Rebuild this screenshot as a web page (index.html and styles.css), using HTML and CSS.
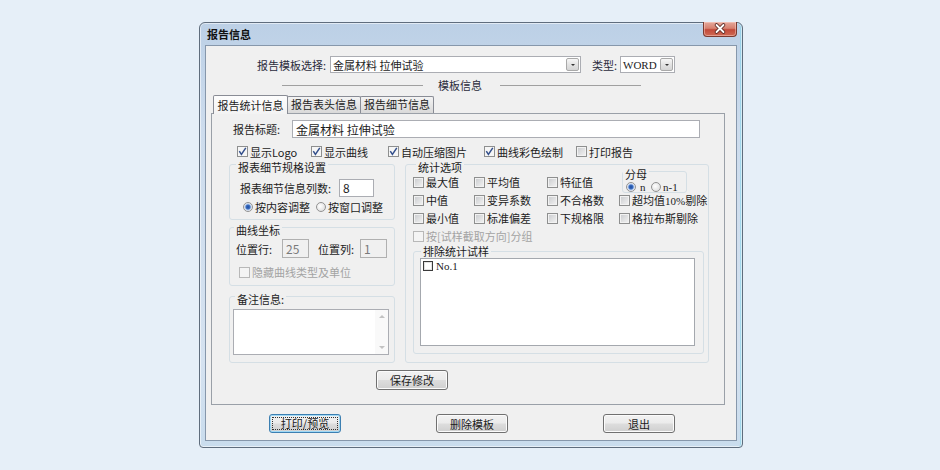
FILE: index.html
```html
<!DOCTYPE html>
<html lang="zh-CN">
<head>
  <meta charset="UTF-8">
  <link rel="stylesheet" href="styles.css">
  <title>报告信息</title>
</head>
<body>
  <div class="desktop">
    <div class="window">
      <div class="titlebar">
        <span class="caption">报告信息</span>
        <span class="close-btn">
          <svg width="34" height="15" viewBox="0 0 34 15">
            <path d="M13.5 4 L20.5 11 M20.5 4 L13.5 11" stroke="#5b2a25" stroke-width="3.6" stroke-linecap="round"/>
            <path d="M13.5 4 L20.5 11 M20.5 4 L13.5 11" stroke="#ffffff" stroke-width="1.8" stroke-linecap="round"/>
          </svg>
        </span>
      </div>

      <div class="client">
        <div class="template-row">
          <span class="lbl lbl-template">报告模板选择:</span>
          <div class="combo combo-template">
            <span class="combo-text">金属材料 拉伸试验</span>
            <span class="drop"><i class="arrow"></i></span>
          </div>
          <span class="lbl lbl-type">类型:</span>
          <div class="combo combo-type">
            <span class="combo-text serif">WORD</span>
            <span class="drop"><i class="arrow"></i></span>
          </div>
        </div>

        <div class="section-head">
          <span class="rule"></span>
          <span class="head-text">模板信息</span>
          <span class="rule"></span>
        </div>

        <div class="tabs">
          <div class="tab tab-first active">报告统计信息</div>
          <div class="tab">报告表头信息</div>
          <div class="tab">报告细节信息</div>
        </div>

        <div class="tab-panel">
          <div class="title-row">
            <span class="lbl lbl-title">报告标题:</span>
            <div class="text-box title-box">金属材料 拉伸试验</div>
          </div>

          <div class="option-row">
            <label class="check opt-logo"><span class="cb on"><svg width="9" height="9" viewBox="0 0 9 9"><path d="M1.3 4.2 L3.4 7.3 L7.8 0.8" fill="none" stroke="#34508c" stroke-width="1.5"/></svg></span><span>显示Logo</span></label>
            <label class="check opt-curve"><span class="cb on"><svg width="9" height="9" viewBox="0 0 9 9"><path d="M1.3 4.2 L3.4 7.3 L7.8 0.8" fill="none" stroke="#34508c" stroke-width="1.5"/></svg></span><span>显示曲线</span></label>
            <label class="check opt-zip"><span class="cb on"><svg width="9" height="9" viewBox="0 0 9 9"><path d="M1.3 4.2 L3.4 7.3 L7.8 0.8" fill="none" stroke="#34508c" stroke-width="1.5"/></svg></span><span>自动压缩图片</span></label>
            <label class="check opt-color"><span class="cb on"><svg width="9" height="9" viewBox="0 0 9 9"><path d="M1.3 4.2 L3.4 7.3 L7.8 0.8" fill="none" stroke="#34508c" stroke-width="1.5"/></svg></span><span>曲线彩色绘制</span></label>
            <label class="check"><span class="cb"></span><span>打印报告</span></label>
          </div>

          <div class="columns">
            <div class="left-col">
              <div class="group group-detail">
                <div class="group-title gt-detail">报表细节规格设置</div>
                <div class="field-row detail-row">
                  <span class="lbl lbl-cols">报表细节信息列数:</span>
                  <div class="text-box cols-box">8</div>
                </div>
                <div class="radio-row detail-radios">
                  <label class="radio radio-content"><span class="rd on"></span><span>按内容调整</span></label>
                  <label class="radio"><span class="rd"></span><span>按窗口调整</span></label>
                </div>
              </div>

              <div class="group group-axis">
                <div class="group-title gt-axis">曲线坐标</div>
                <div class="field-row axis-row">
                  <span class="lbl lbl-pos">位置行:</span>
                  <div class="text-box pos-box disabled">25</div>
                  <span class="lbl lbl-pos lbl-poscol">位置列:</span>
                  <div class="text-box pos-box disabled">1</div>
                </div>
                <label class="check disabled hide-unit"><span class="cb off"></span><span>隐藏曲线类型及单位</span></label>
              </div>

              <div class="group group-memo">
                <div class="group-title gt-memo">备注信息:</div>
                <div class="memo">
                  <div class="memo-text"></div>
                  <div class="vscroll"><i class="up"></i><i class="down"></i></div>
                </div>
              </div>
            </div>

            <div class="group group-stats">
              <div class="group-title gt-stats">统计选项</div>
              <div class="stats-grid">
                <label class="check"><span class="cb"></span><span>最大值</span></label>
                <label class="check"><span class="cb"></span><span>平均值</span></label>
                <label class="check"><span class="cb"></span><span>特征值</span></label>
                <div class="group group-denom">
                  <div class="group-title gt-denom">分母</div>
                  <div class="denom-row">
                    <label class="radio radio-n"><span class="rd on"></span><span class="serif">n</span></label>
                    <label class="radio"><span class="rd"></span><span class="serif">n-1</span></label>
                  </div>
                </div>
                <label class="check"><span class="cb"></span><span>中值</span></label>
                <label class="check"><span class="cb"></span><span>变异系数</span></label>
                <label class="check"><span class="cb"></span><span>不合格数</span></label>
                <label class="check"><span class="cb"></span><span>超均值<span class="serif">10%</span>剔除</span></label>
                <label class="check"><span class="cb"></span><span>最小值</span></label>
                <label class="check"><span class="cb"></span><span>标准偏差</span></label>
                <label class="check"><span class="cb"></span><span>下规格限</span></label>
                <label class="check"><span class="cb"></span><span>格拉布斯剔除</span></label>
              </div>
              <label class="check disabled group-by"><span class="cb off"></span><span>按[试样截取方向]分组</span></label>

              <div class="group group-exclude">
                <div class="group-title gt-exclude">排除统计试样</div>
                <div class="list-box">
                  <label class="list-item"><span class="flat-cb"></span><span class="serif">No.1</span></label>
                </div>
              </div>
            </div>
          </div>

          <button class="btn btn-save">保存修改</button>
        </div>

        <div class="dialog-buttons">
          <button class="btn btn-default"><span class="focus">打印/预览</span></button>
          <button class="btn">删除模板</button>
          <button class="btn">退出</button>
        </div>
      </div>
    </div>
  </div>
</body>
</html>
```

FILE: styles.css
```css
/* Reset */
* {
  box-sizing: border-box;
}

body {
  margin: 0;
  height: 470px;
  overflow: hidden;
  background-color: #e6eff8;
  font-family: "Noto Sans CJK SC", sans-serif;
  font-size: 11px;
  line-height: 12px;
  color: #1c1c1c;
}

.serif {
  font-family: "Liberation Serif", "Noto Sans CJK SC", serif;
  font-size: 11px;
}

.desktop {
  padding: 22px 0 0 199px;
}

/* Window frame */
.window {
  width: 544px;
  height: 426px;
  display: flex;
  flex-direction: column;
  border: 1px solid #5f6d7d;
  border-radius: 6px 6px 4px 4px;
  background: linear-gradient(#bcd0e6, #cddced 25%, #d5e2f0 80%, #c9dced);
  box-shadow: inset 0 0 0 1px rgba(255, 255, 255, 0.55), inset -2px 0 0 rgba(120, 210, 235, 0.5);
}

.titlebar {
  height: 22px;
  display: flex;
  justify-content: space-between;
  align-items: center;
  padding-left: 7px;
}

.caption {
  font-weight: bold;
  color: #111;
}

.close-btn {
  align-self: flex-start;
  width: 34px;
  height: 15px;
  margin-top: -1px;
  margin-right: 5px;
  border: 1px solid #7b3a30;
  border-top: none;
  border-radius: 0 0 4px 4px;
  background: linear-gradient(#e4a89b, #d7806f 45%, #c24a3a 55%, #cf6a55);
  box-shadow: inset 0 0 0 1px rgba(255, 220, 210, 0.45);
}

.close-btn svg {
  display: block;
  margin: -1px 0 0 -1px;
}

.client {
  height: 396px;
  margin: 0 5px;
  background-color: #f0f0f0;
  border: 1px solid #8697ab;
}

/* Template selection row */
.template-row {
  display: flex;
  align-items: center;
  margin: 10px 0 0 51px;
  height: 17px;
}

.lbl {
  white-space: nowrap;
}

.lbl-template {
  width: 73px;
  color: #2b2b3c;
}

.lbl-type {
  width: 28px;
  margin-left: 11px;
  color: #2b2b3c;
}

.combo {
  height: 17px;
  display: flex;
  align-items: center;
  background-color: #fff;
  border: 1px solid #abadb3;
  padding: 0 1px 0 2px;
}

.combo-template {
  width: 251px;
}

.combo-type {
  width: 55px;
}

.combo-text {
  flex: 1;
  white-space: nowrap;
}

.drop {
  flex: none;
  width: 13px;
  height: 13px;
  display: flex;
  align-items: center;
  justify-content: center;
  border: 1px solid #a9a9a9;
  border-radius: 2px;
  background: linear-gradient(#f7f7f7, #e3e3e3 50%, #d5d5d5);
}

.arrow {
  width: 0;
  height: 0;
  border-left: 2px solid transparent;
  border-right: 2px solid transparent;
  border-top: 2px solid #333;
}

/* Section heading */
.section-head {
  display: flex;
  align-items: center;
  height: 12px;
  margin: 6px 0 0 76px;
}

.rule {
  width: 141px;
  height: 1px;
  background-color: #a0a0a0;
}

.head-text {
  width: 77px;
  padding-left: 15px;
  color: #2b2b3c;
}

/* Tabs */
.tabs {
  display: flex;
  align-items: flex-end;
  height: 18px;
  margin: 4px 0 0 7px;
}

.tab {
  width: 74px;
  height: 17px;
  margin-left: -1px;
  border: 1px solid #898c95;
  border-bottom: none;
  border-radius: 2px 2px 0 0;
  background: linear-gradient(#f4f4f4, #e6e6e6 50%, #d9d9d9);
  text-align: center;
  line-height: 15px;
  white-space: nowrap;
}

.tab-first {
  margin-left: 0;
}

.tab.active {
  position: relative;
  z-index: 1;
  width: 75px;
  height: 19px;
  margin-bottom: -1px;
  background: linear-gradient(#fdfdfd, #f3f3f3);
  line-height: 18px;
}

/* Tab page */
.tab-panel {
  width: 514px;
  height: 292px;
  margin-left: 5px;
  border: 1px solid #9aa0a8;
  background-color: #f0f0f0;
}

.title-row {
  display: flex;
  align-items: center;
  height: 18px;
  margin: 6px 0 0 21px;
}

.lbl-title {
  width: 59px;
}

.text-box {
  height: 18px;
  padding: 2px 3px;
  background-color: #fff;
  border: 1px solid #abadb3;
  white-space: nowrap;
}

.title-box {
  width: 408px;
  font-size: 12px;
  line-height: 13px;
}

.text-box.disabled {
  background-color: #f0f0f0;
  border-color: #b0b0b0;
  color: #7a7a7a;
}

/* Checkboxes and radios */
.check,
.radio {
  display: flex;
  align-items: center;
  gap: 2px;
  white-space: nowrap;
}

.cb {
  flex: none;
  width: 11px;
  height: 11px;
  display: flex;
  align-items: center;
  justify-content: center;
  border: 1px solid #8e8f8f;
  background: linear-gradient(135deg, #c8cacd, #f4f4f4);
  box-shadow: inset 0 0 0 1px #f2f2f2;
}

.cb.on {
  background: #f6f6f6;
  box-shadow: none;
}

.cb.off {
  border-color: #b8b8b8;
  background: #f4f4f4;
  box-shadow: none;
}

.check.disabled {
  color: #a3a3a3;
}

.rd {
  flex: none;
  width: 10px;
  height: 10px;
  border-radius: 50%;
  border: 1px solid #929292;
  background: radial-gradient(circle at 40% 40%, #ffffff, #d6d6d6);
}

.rd.on {
  background: radial-gradient(circle, #1f4da0 0, #3a6cc0 2px, #b7cdee 3px, #f2f2f2 4px);
}

.option-row {
  display: flex;
  align-items: center;
  height: 11px;
  margin: 8px 0 0 25px;
}

.opt-logo {
  width: 74px;
}

.opt-curve {
  width: 77px;
}

.opt-zip {
  width: 96px;
}

.opt-color {
  width: 92px;
}

/* Group boxes */
.columns {
  display: flex;
  gap: 10px;
  margin: 7px 0 0 17px;
}

.left-col {
  width: 166px;
}

.group {
  border: 1px solid #d5dfe5;
  border-radius: 3px;
}

.group-title {
  width: fit-content;
  margin-top: -4px;
  padding: 0 2px;
  background-color: #f0f0f0;
  white-space: nowrap;
}

.group-detail {
  height: 56px;
}

.gt-detail {
  margin-left: 6px;
}

.field-row {
  display: flex;
  align-items: center;
}

.detail-row {
  height: 18px;
  margin: 6px 0 0 10px;
}

.lbl-cols {
  width: 99px;
}

.cols-box {
  width: 35px;
  font-size: 12px;
  line-height: 13px;
  padding-top: 1px;
}

.radio-row {
  display: flex;
  align-items: center;
}

.detail-radios {
  height: 12px;
  margin: 4px 0 0 13px;
}

.radio-content {
  width: 73px;
}

.group-axis {
  height: 59px;
  margin-top: 7px;
}

.gt-axis {
  margin-left: 4px;
}

.axis-row {
  height: 19px;
  margin: 3px 0 0 6px;
}

.lbl-pos {
  width: 46px;
}

.lbl-poscol {
  width: 42px;
  margin-left: 9px;
}

.pos-box {
  width: 27px;
  height: 19px;
  font-size: 12px;
  line-height: 13px;
  padding: 2px 3px;
}

.hide-unit {
  height: 12px;
  margin: 8px 0 0 9px;
}

.group-memo {
  height: 67px;
  margin-top: 10px;
}

.gt-memo {
  margin-left: 5px;
}

.memo {
  display: flex;
  width: 156px;
  height: 46px;
  margin: 4px 0 0 3px;
  border: 1px solid #abadb3;
  background-color: #fff;
}

.memo-text {
  flex: 1;
}

.vscroll {
  width: 13px;
  display: flex;
  flex-direction: column;
  justify-content: space-between;
  align-items: center;
  padding: 5px 0;
  background-color: #f9f9f9;
}

.vscroll i {
  width: 0;
  height: 0;
  border-left: 3px solid transparent;
  border-right: 3px solid transparent;
}

.vscroll .up {
  border-bottom: 3px solid #c2c2c2;
}

.vscroll .down {
  border-top: 3px solid #c2c2c2;
}

/* Statistics options */
.group-stats {
  width: 304px;
  height: 199px;
}

.gt-stats {
  margin-left: 10px;
}

.stats-grid {
  display: grid;
  grid-template-columns: 61px 73px 72px 85px;
  grid-auto-rows: 18px;
  align-items: center;
  margin: 0 0 0 7px;
}

.group-denom {
  align-self: start;
  width: 65px;
  height: 22px;
  margin: -2px 0 0 3px;
}

.gt-denom {
  margin-left: 0;
}

.denom-row {
  display: flex;
  align-items: center;
  height: 11px;
  margin: 1px 0 0 3px;
}

.radio-n {
  width: 25px;
  gap: 4px;
}

.group-by {
  height: 12px;
  margin: 3px 0 0 7px;
}

.group-exclude {
  width: 291px;
  height: 103px;
  margin: 9px 0 0 7px;
}

.gt-exclude {
  margin: -7px 0 0 7px;
}

.list-box {
  width: 275px;
  height: 88px;
  margin: 1px 0 0 6px;
  padding: 1px 2px;
  background-color: #fff;
  border: 1px solid #a4a8ae;
}

.list-item {
  display: flex;
  align-items: center;
  gap: 3px;
  height: 12px;
}

.flat-cb {
  width: 10px;
  height: 10px;
  border: 1px solid #3a3a3a;
  background-color: #fff;
  box-shadow: inset 0 0 0 1px #e2e2e2;
}

/* Buttons */
.btn {
  display: block;
  width: 72px;
  height: 19px;
  padding: 0;
  font-family: "Noto Sans CJK SC", sans-serif;
  font-size: 11px;
  line-height: 12px;
  color: #1c1c1c;
  border: 1px solid #707070;
  border-radius: 3px;
  background: linear-gradient(#f2f2f2, #ebebeb 48%, #dddddd 52%, #cfcfcf);
  box-shadow: inset 0 0 0 1px #fbfbfb;
}

.btn-save {
  height: 20px;
  margin: 7px 0 0 164px;
}

.dialog-buttons {
  display: flex;
  gap: 95px;
  margin: 9px 0 0 63px;
}

.btn-default {
  border-color: #3c7fb1;
  box-shadow: inset 0 0 0 1px #9fd9f6;
  padding: 2px;
}

.focus {
  display: block;
  height: 13px;
  border: 1px dotted #333;
  line-height: 11px;
}
```
